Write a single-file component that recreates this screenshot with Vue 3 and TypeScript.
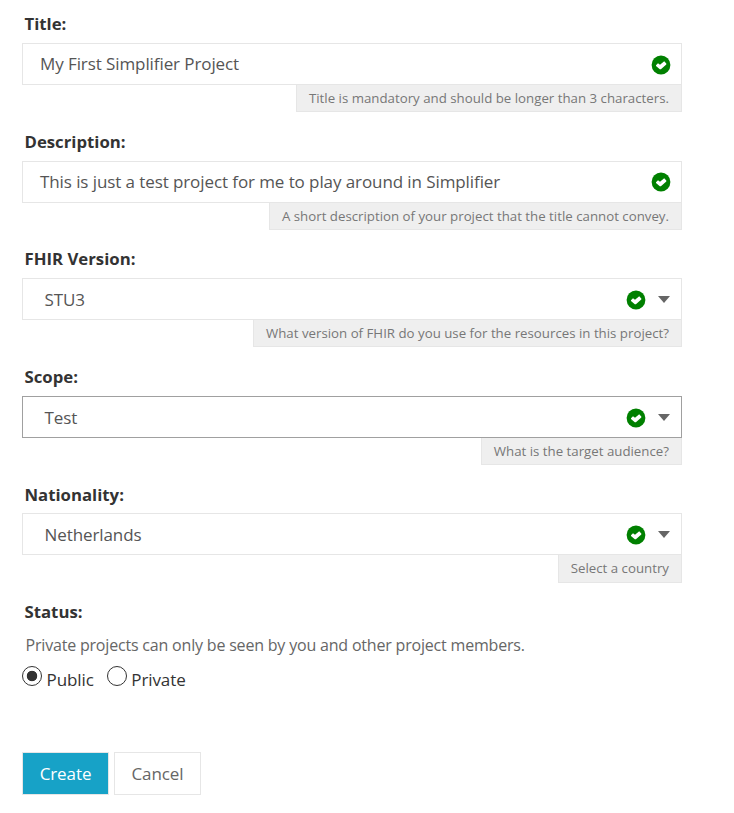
<script setup lang="ts">
interface Field {
  label: string
  value: string
  hint: string
  select: boolean
  focused?: boolean
}

const fields: Field[] = [
  { label: 'Title:', value: 'My First Simplifier Project', hint: 'Title is mandatory and should be longer than 3 characters.', select: false },
  { label: 'Description:', value: 'This is just a test project for me to play around in Simplifier', hint: 'A short description of your project that the title cannot convey.', select: false },
  { label: 'FHIR Version:', value: 'STU3', hint: 'What version of FHIR do you use for the resources in this project?', select: true },
  { label: 'Scope:', value: 'Test', hint: 'What is the target audience?', select: true, focused: true },
  { label: 'Nationality:', value: 'Netherlands', hint: 'Select a country', select: true },
]
</script>

<template>
  <form class="form" @submit.prevent>
    <div v-for="f in fields" :key="f.label" class="field">
      <div class="label">{{ f.label }}</div>
      <div class="control" :class="{ select: f.select, focused: f.focused }">
        <span class="value">{{ f.value }}</span>
        <svg class="check" viewBox="0 0 20 20">
          <circle cx="10" cy="10" r="9.4" fill="#008000" />
          <path d="M5 10.2 7 8.3 9 9.8 13.2 6.2 15.3 8.4V9.4L9.9 14.3H8.8L5 11Z" fill="#fff" />
        </svg>
        <svg v-if="f.select" class="arrow" viewBox="0 0 12 7"><path d="M0 0H12L6 7Z" fill="#666" /></svg>
      </div>
      <div class="hint">{{ f.hint }}</div>
    </div>
    <div class="label">Status:</div>
    <p class="note">Private projects can only be seen by you and other project members.</p>
    <div class="radios">
      <span class="radio on"></span><span class="public">Public</span>
      <span class="radio"></span><span>Private</span>
    </div>
    <div class="actions">
      <button class="create">Create</button>
      <button class="cancel">Cancel</button>
    </div>
  </form>
</template>

<style>
body { background: #fff; }
</style>

<style scoped>
.form { box-sizing: border-box; width: 682px; padding: 12px 0 0 22px; font: 17px/24px "Open Sans", sans-serif; color: #555; }
.field { display: flex; flex-direction: column; height: 117.6px; }
.label { height: 31px; padding-left: 2.5px; font-size: 16.75px; font-weight: 700; color: #333; flex: none; }
.field:nth-child(5) .label { box-sizing: border-box; padding-top: 0.5px; }
.control { box-sizing: border-box; height: 42px; flex: none; display: flex; align-items: center; border: 1px solid #e6e6e6; padding: 0 10.5px 0 17px; }
.control.select { padding: 1px 11px 0 21.5px; }
.control.focused { border-color: #a0a0a0; padding-top: 2px; }
.value { flex: 1; white-space: nowrap; letter-spacing: -0.09px; }
.check { width: 20px; height: 20px; margin-top: 1px; }
.select .check { margin: 0; }
.arrow { width: 12px; height: 7px; margin-left: 12px; }
.hint { box-sizing: border-box; align-self: flex-end; height: 27px; padding: 0 12px; border: 1px solid #e6e6e6; border-top: 0; background: #efefef; color: #777; font-size: 13.28px; line-height: 26px; white-space: nowrap; }
.field:nth-child(5) .hint { height: 27.6px; }
.note { margin: 2px 0 0 3.5px; font-size: 16px; letter-spacing: -0.19px; color: #666; }
.radios { display: flex; align-items: center; height: 24px; margin-top: 11px; color: #333; letter-spacing: -0.09px; }
.radio { box-sizing: border-box; width: 20px; height: 20px; border: 1px solid #333; border-radius: 50%; margin: -8px 4.5px 0 0; }
.radio.on { background: radial-gradient(circle, #333 4.9px, #fff 5.6px); }
.public { margin-right: 13px; }
.actions { display: flex; gap: 5px; margin-top: 60px; }
button { box-sizing: border-box; height: 43px; padding: 1px 0 0; border: 1px solid #e6e6e6; font: inherit; letter-spacing: -0.09px; }
.create { width: 87px; background: #17a2c7; color: #fff; }
.cancel { width: 87px; background: #fff; color: #666; }
</style>
